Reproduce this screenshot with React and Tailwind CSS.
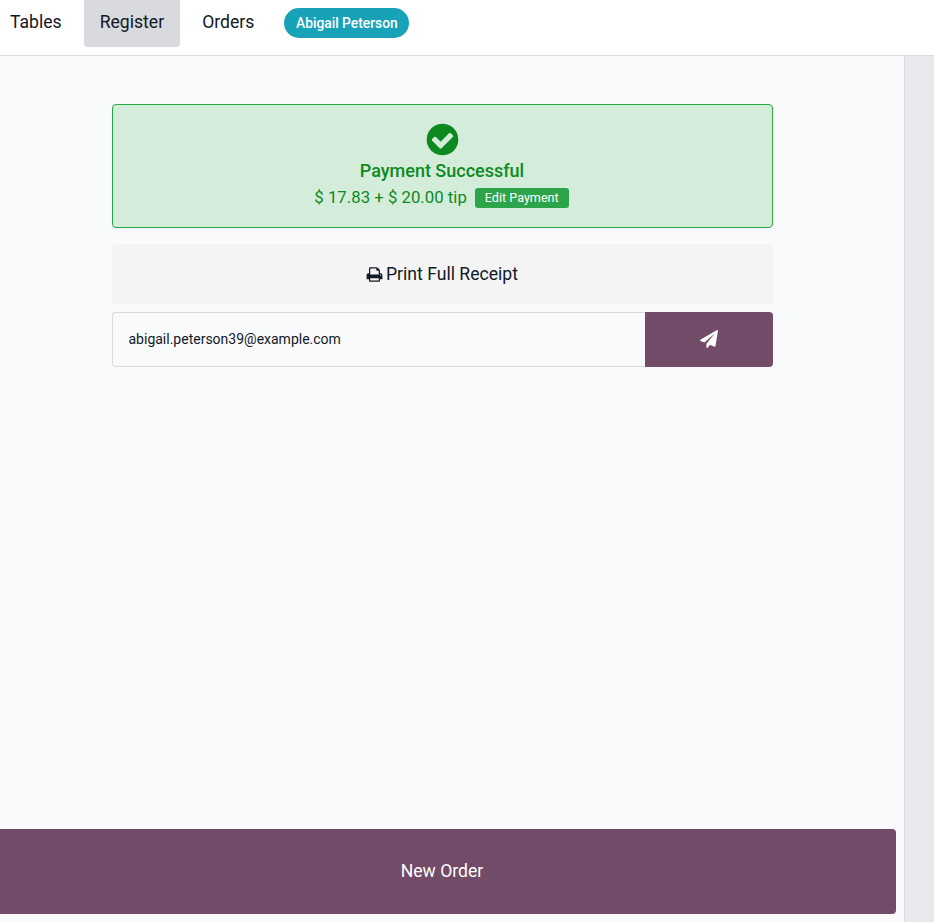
const PrintIcon = () => (
  <svg viewBox="0 0 1792 1792" className="w-[17px] h-[17px] fill-current">
    <path d="M448 1536h896v-256h-896v256zm0-640h896v-384h-160q-40 0-68-28t-28-68v-160h-640v640zm1152 64q0-26-19-45t-45-19-45 19-19 45 19 45 45 19 45-19 19-45zm128 0v416q0 13-9.500 22.500t-22.500 9.500h-224v160q0 40-28 68t-68 28h-960q-40 0-68-28t-28-68v-160h-224q-13 0-22.500-9.500t-9.500-22.500v-416q0-79 56.500-135.500t135.500-56.500h64v-544q0-40 28-68t68-28h672q40 0 88 20t76 48l152 152q28 28 48 76t20 88v256h64q79 0 135.500 56.500t56.500 135.500z" />
  </svg>
);

const PlaneIcon = () => (
  <svg viewBox="0 0 1792 1792" className="w-[18px] h-[18px] fill-white">
    <path d="M1764 11q33 24 27 64l-256 1536q-5 29-32 45-14 8-31 8-11 0-24-5l-453-185-242 295q-18 23-49 23-13 0-22-4-19-7-30.500-23.500t-11.500-36.500v-349l864-1059-1069 925-395-162q-37-14-40-55-2-40 32-59l1664-960q15-9 32-9 20 0 36 11z" />
  </svg>
);

const CheckIcon = () => (
  <svg viewBox="0 0 1792 1792" className="w-[37px] h-[37px] fill-[#0d8a1f]">
    <path d="M1412 734q0-28-18-46l-91-90q-19-19-45-19t-45 19l-408 407-226-226q-19-19-45-19t-45 19l-91 90q-18 18-18 46 0 27 18 45l362 362q19 19 45 19 27 0 46-19l543-543q18-18 18-45zm252 162q0 209-103 385.500t-279.500 279.500-385.500 103-385.500-103-279.500-279.500-103-385.500 103-385.500 279.500-279.500 385.500-103 385.500 103 279.500 279.500 103 385.500z" />
  </svg>
);

export default function App() {
  return (
    <div className="h-[922px] w-[934px] overflow-hidden flex flex-col bg-white font-['Roboto',sans-serif] text-[#1f2937]">
      <nav className="h-[56px] shrink-0 flex items-start border-b border-[#d8dadd] bg-white">
        <a className="h-[47px] px-[10px] flex items-center text-[17.6px] text-[#111827] pb-[3px]">Tables</a>
        <a className="ml-[12px] h-[47px] px-4 flex items-center text-[17.6px] text-[#111827] bg-[#d8dadd] rounded-b pb-[3px]">Register</a>
        <a className="ml-[6px] h-[47px] px-4 flex items-center text-[17.6px] text-[#111827] pb-[3px]">Orders</a>
        <span className="ml-[14px] mt-[8px] h-[30px] w-[125px] flex items-center justify-center rounded-full bg-[#17a2b8] text-white text-[13.8px] font-medium">Abigail Peterson</span>
      </nav>
      <div className="flex-1 flex min-h-0">
        <main className="w-[904px] flex flex-col bg-[#f9fafb]">
          <div className="flex-1 flex flex-col pl-[112px] pr-[131px] pt-[48px]">
            <div className="h-[124px] flex flex-col items-center pt-[16px] bg-[#d4edda] border border-[#28a745] rounded">
              <CheckIcon />
              <div className="pr-[1px] text-[#0d8a1f] text-[18px] leading-[26px] font-medium">Payment Successful</div>
              <div className="pr-[2px] flex items-center text-[#0d8a1f] text-[16.8px] leading-[27px]">
                <span>$ 17.83 + $ 20.00 tip</span>
                <span className="ml-2 h-[20px] px-[10px] pb-[1px] flex items-center rounded-[3px] bg-[#2ca44a] text-white text-[12.6px]">Edit Payment</span>
              </div>
            </div>
            <div className="mt-4 h-[60px] pr-[1px] flex items-center justify-center gap-[3px] bg-[#f4f4f4] rounded text-[17.6px] text-[#111827]">
              <PrintIcon />
              <span>Print Full Receipt</span>
            </div>
            <div className="mt-2 h-[55px] flex">
              <div className="flex-1 flex items-center pl-[15.5px] bg-[#f9fafb] border border-[#d8dadd] border-r-0 rounded-l text-[14px] text-[#111827]">abigail.peterson39@example.com</div>
              <div className="w-[128px] flex items-center justify-center bg-[#714b67] rounded-r pb-[2px]"><PlaneIcon /></div>
            </div>
          </div>
          <div className="h-[85px] mb-[8px] -ml-3 mr-2 flex items-center justify-center bg-[#714b67] rounded-r text-white text-[17.6px]">New Order</div>
        </main>
        <aside className="w-[30px] bg-[#e7e9ed] border-l border-[#d8dadd]" />
      </div>
    </div>
  );
}
